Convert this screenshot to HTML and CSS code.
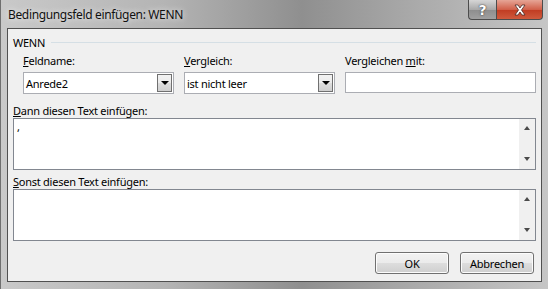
FILE: index.html
```html
<!DOCTYPE html>
<html lang="de">

<head>
    <meta charset="utf-8">
    <title>Bedingungsfeld einfügen: WENN</title>
    <link rel="stylesheet" href="styles.css">
</head>

<body>
    <div class="window">
        <div class="titlebar">
            <span class="title">Bedingungsfeld einfügen: WENN</span>
            <div class="caption">
                <button class="cap help">?</button>
                <button class="cap close">
                    <svg width="16" height="12" viewBox="0 0 16 12">
                        <path d="M3 1h3l2 3 2-3h3l-3.5 5 3.5 5h-3l-2-3-2 3h-3l3.5-5z" fill="#fff" stroke="#4a2a24" stroke-width="0.8"/>
                    </svg>
                </button>
            </div>
        </div>

        <div class="client">
            <div class="group">
                <span>WENN</span>
                <div class="line"></div>
            </div>

            <div class="fields">
                <div class="field f1">
                    <label><u>F</u>eldname:</label>
                    <div class="combo">
                        <span>Anrede2</span>
                        <div class="drop"><i></i></div>
                    </div>
                </div>
                <div class="field f2">
                    <label><u>V</u>ergleich:</label>
                    <div class="combo">
                        <span>ist nicht leer</span>
                        <div class="drop"><i></i></div>
                    </div>
                </div>
                <div class="field f3">
                    <label>Vergleichen <u>m</u>it:</label>
                    <div class="edit"></div>
                </div>
            </div>

            <div class="block">
                <label><u>D</u>ann diesen Text einfügen:</label>
                <div class="memo">
                    <div class="memo-text">,</div>
                    <div class="scroll">
                        <i class="up"></i>
                        <i class="down"></i>
                    </div>
                </div>
            </div>

            <div class="block">
                <label><u>S</u>onst diesen Text einfügen:</label>
                <div class="memo">
                    <div class="memo-text"></div>
                    <div class="scroll">
                        <i class="up"></i>
                        <i class="down"></i>
                    </div>
                </div>
            </div>

            <div class="actions">
                <button class="btn">OK</button>
                <button class="btn">Abbrechen</button>
            </div>
        </div>
    </div>
</body></html>
```

FILE: styles.css
```css
/****GENERELT****/

body {
    margin: 0;
    background-color: #fff;
}

.window {
    width: 548px;
    height: 289px;
    box-sizing: border-box;
    display: flex;
    flex-direction: column;
    padding: 0 6px 7px 6px;
    border-left: 1px solid #6f6f6f;
    background: linear-gradient(90deg, #c9c9c9 0%, #b4b4b4 30%, #8f8f8f 55%, #a9a9a9 75%, #c6c6c6 100%);
    font-family: 'Noto Sans', 'Open Sans', sans-serif;
    font-size: 11px;
    letter-spacing: -0.25px;
    color: #000;
}

/****TITLE****/

.titlebar {
    height: 28px;
    display: flex;
    justify-content: space-between;
    align-items: flex-start;
    flex-shrink: 0;
}

.title {
    font-size: 12px;
    letter-spacing: -0.35px;
    margin-top: 6px;
    margin-left: 1px;
    color: #111;
    text-shadow: 0 0 6px rgba(255, 255, 255, 0.9);
}

.caption {
    display: flex;
    margin-right: -1px;
}

.cap {
    height: 20px;
    border: 1px solid #4c4c4c;
    border-top: none;
    padding: 0;
    margin: 0;
    display: flex;
    align-items: center;
    justify-content: center;
}

.help {
    width: 28px;
    border-radius: 0 0 0 4px;
    border-right: none;
    background: linear-gradient(#d6d6d6, #a9a9a9 50%, #8d8d8d 51%, #a0a0a0);
    color: #fff;
    font-family: 'DejaVu Sans', sans-serif;
    font-weight: bold;
    font-size: 14px;
    text-shadow: 0 0 1px #333, 0 0 2px #555;
}

.close {
    width: 47px;
    border-radius: 0 0 4px 0;
    background: linear-gradient(#e6a596, #d1604a 50%, #c03b21 51%, #cf5a3d);
}

/****CLIENT****/

.client {
    flex: 1;
    background-color: #f0f0f0;
    border: 1px solid #505050;
    padding: 6px 5px 0 5px;
}

label {
    display: block;
    height: 15px;
    line-height: 15px;
}

u {
    text-decoration-thickness: 1px;
    text-underline-offset: 1px;
}

.group {
    display: flex;
    align-items: center;
    gap: 6px;
    height: 14px;
}

.line {
    flex: 1;
    height: 1px;
    background-color: #d5dfe5;
}

.fields {
    display: flex;
    margin-top: 4px;
    padding-left: 10px;
}

.field label {
    margin-bottom: 4px;
}

.f1 {
    width: 151px;
    margin-right: 10px;
}

.f2 {
    width: 151px;
    margin-right: 10px;
}

.f3 {
    flex: 1;
}

.combo {
    height: 22px;
    box-sizing: border-box;
    border: 1px solid #abadb3;
    background-color: #fff;
    display: flex;
    align-items: center;
    justify-content: space-between;
    padding-left: 2px;
}

.drop {
    width: 15px;
    height: 18px;
    box-sizing: border-box;
    margin-right: 1px;
    border: 1px solid #707070;
    background: linear-gradient(#f2f2f2, #ebebeb 50%, #dddddd 51%, #cfcfcf);
    display: flex;
    align-items: center;
    justify-content: center;
}

.drop i {
    width: 0;
    height: 0;
    border-left: 4px solid transparent;
    border-right: 4px solid transparent;
    border-top: 4px solid #000;
}

.edit {
    height: 21px;
    box-sizing: border-box;
    margin-top: 1px;
    border: 1px solid #abadb3;
    background-color: #fff;
}

.block {
    margin-top: 9px;
}

.block + .block {
    margin-top: 4px;
}

.memo {
    height: 52px;
    box-sizing: border-box;
    border: 1px solid #828790;
    background-color: #fff;
    display: flex;
}

.memo-text {
    flex: 1;
    padding: 1px 3px;
    line-height: 14px;
}

.scroll {
    width: 16px;
    background-color: #f0f0f0;
    display: flex;
    flex-direction: column;
    justify-content: space-between;
    align-items: center;
    padding: 7px 0 8px;
}

.scroll i {
    width: 0;
    height: 0;
    border-left: 3px solid transparent;
    border-right: 3px solid transparent;
}

.scroll .up {
    border-bottom: 4px solid #4a4a4a;
}

.scroll .down {
    border-top: 4px solid #4a4a4a;
}

/****KNAPPER****/

.actions {
    display: flex;
    justify-content: flex-end;
    gap: 11px;
    margin-top: 11px;
    padding-right: 2px;
}

.btn {
    width: 74px;
    height: 22px;
    border: 1px solid #707070;
    border-radius: 3px;
    background: linear-gradient(#f2f2f2, #ebebeb 50%, #dddddd 51%, #cfcfcf);
    box-shadow: inset 0 0 0 1px #fcfcfc;
    font-family: 'Noto Sans', 'Open Sans', sans-serif;
    font-size: 11px;
    letter-spacing: -0.25px;
    color: #000;
    padding: 0;
}
```
